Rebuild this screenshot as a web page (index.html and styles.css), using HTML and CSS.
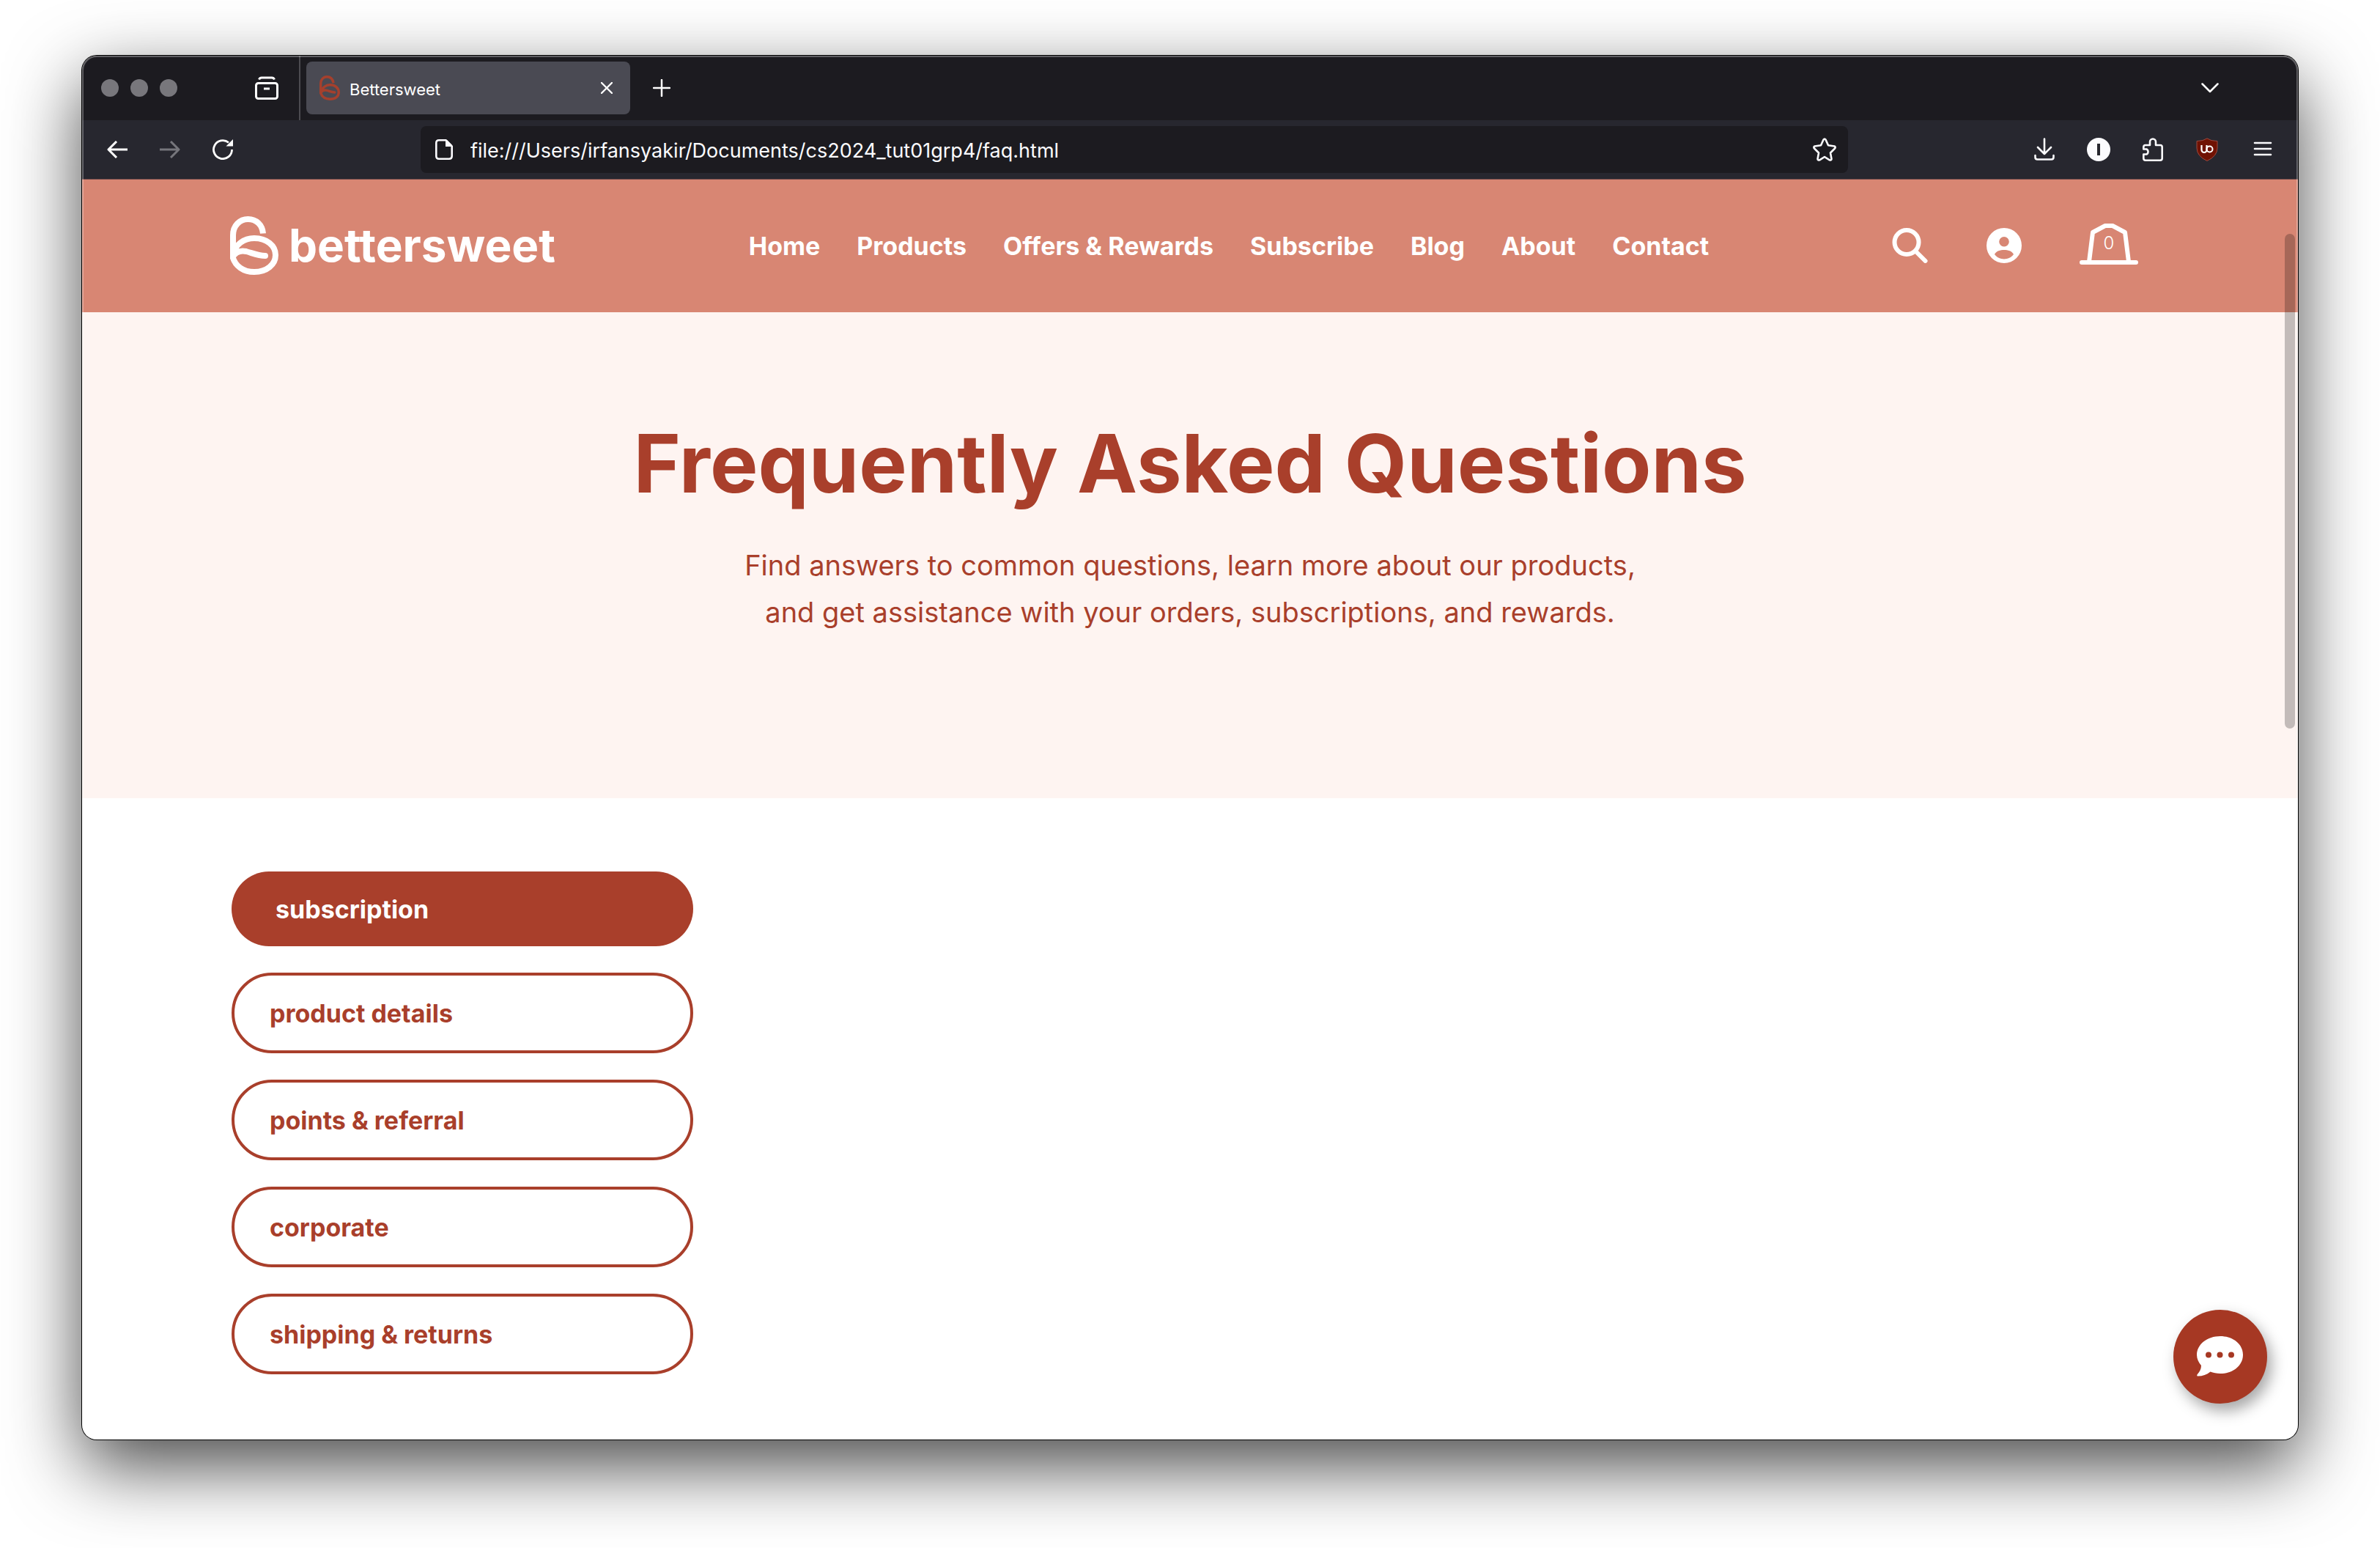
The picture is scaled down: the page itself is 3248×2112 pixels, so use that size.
FILE: index.html
```html
<!DOCTYPE html>
<html lang="en">
<head>
<meta charset="utf-8">
<title>Bettersweet</title>
<link rel="stylesheet" href="styles.css">
</head>
<body>
<div class="window">
  <div class="tabbar">
    <div class="lights"><span class="light"></span><span class="light"></span><span class="light"></span></div>
    <button class="icon-btn recent" aria-label="Recent browsing">
      <svg width="32" height="32" viewBox="0 0 32 32" fill="none" stroke="#fff" stroke-width="3"><rect x="1.500" y="9.500" width="29" height="21" rx="3"/><path d="M5.500 4.500Q6.500 2 9 2H23Q25.500 2 26.500 4.500"/><path d="M12 17H20"/></svg>
    </button>
    <div class="tab">
      <svg class="favicon" width="28" height="34" viewBox="0 0 66 80" fill="none" stroke="#a5402d" stroke-width="8"><path d="M4 52V26C4 14 12 4 24 4S43 13 45 24"/><path d="M3 54C10 38 20 30 34 30C50 30 62 40 62 54S50 76 34 76C20 76 9 70 4 57C8 48 16 46 24 48S38 54 49 54" stroke-linecap="round"/></svg>
      <span class="tab-title">Bettersweet</span>
      <button class="icon-btn" aria-label="Close tab"><svg width="16" height="16" viewBox="0 0 16 16" stroke="#fff" stroke-width="2.400" stroke-linecap="round"><path d="M1 1L15 15M15 1L1 15"/></svg></button>
    </div>
    <button class="icon-btn new-tab" aria-label="New tab"><svg width="24" height="24" viewBox="0 0 24 24" stroke="#fff" stroke-width="2.500" stroke-linecap="round"><path d="M12 1V23M1 12H23"/></svg></button>
    <button class="icon-btn all-tabs" aria-label="List all tabs"><svg width="24" height="14" viewBox="0 0 24 14" fill="none" stroke="#fff" stroke-width="2.500" stroke-linecap="round" stroke-linejoin="round"><path d="M1.500 1.500L12 12L22.500 1.500"/></svg></button>
  </div>
  <div class="toolbar">
    <div class="history">
      <button class="icon-btn" aria-label="Back"><svg width="28" height="24" viewBox="0 0 28 24" fill="none" stroke="#fff" stroke-width="3" stroke-linejoin="round"><path d="M28 12H2M13 1L2 12L13 23"/></svg></button>
      <button class="icon-btn" aria-label="Forward" disabled><svg width="28" height="24" viewBox="0 0 28 24" fill="none" stroke="#76767c" stroke-width="3" stroke-linejoin="round"><path d="M0 12H26M15 1L26 12L15 23"/></svg></button>
      <button class="icon-btn" aria-label="Reload"><svg width="28" height="28" viewBox="0 0 28 28"><path d="M26.500 14A12.500 12.500 0 1 1 22 4.500" fill="none" stroke="#fff" stroke-width="2.800"/><path d="M28 0V9.500H18.500Z" fill="#fff"/></svg></button>
    </div>
    <div class="urlbar">
      <svg width="24" height="28" viewBox="0 0 24 28"><path d="M5 1.300H14.500L22.700 9.500V23Q22.700 26.700 19 26.700H5Q1.300 26.700 1.300 23V5Q1.300 1.300 5 1.300Z" fill="none" stroke="#fbfbfe" stroke-width="2.600"/><path d="M14 1H16L23 8V10H14Z" fill="#fbfbfe"/></svg>
      <input class="url" type="text" aria-label="Address" value="file:///Users/irfansyakir/Documents/cs2024_tut01grp4/faq.html">
      <button class="icon-btn" aria-label="Bookmark this page"><svg width="32" height="32" viewBox="0 0 32 32" fill="none" stroke="#fbfbfe" stroke-width="2.600" stroke-linejoin="round"><path d="M14.500 2.500Q16 .5 17.500 2.500L21 10.300L29.500 11.500Q31.500 12.500 30 14.500L24 20.500L25.500 29Q25 31.200 22.800 30.300L16 26L9.200 30.300Q7 31.200 6.500 29L8 20.500L2 14.500Q.5 12.500 2.500 11.500L11 10.300Z"/></svg></button>
    </div>
    <div class="tools">
      <button class="icon-btn" aria-label="Downloads"><svg width="32" height="32" viewBox="0 0 32 32" fill="none" stroke="#fbfbfe" stroke-width="2.600" stroke-linecap="round" stroke-linejoin="round"><path d="M16 1.500V22M7 13L16 22L25 13M3.500 24V26.500Q3.500 29.500 6.500 29.500H25.500Q28.500 29.500 28.500 26.500V24"/></svg></button>
      <button class="icon-btn" aria-label="Account"><svg width="32" height="32" viewBox="0 0 32 32"><circle cx="16" cy="16" r="16" fill="#fbfbfe"/><rect x="14" y="8" width="4" height="16" fill="#27272f"/></svg></button>
      <button class="icon-btn" aria-label="Extensions"><svg width="32" height="32" viewBox="0 0 32 32" fill="none" stroke="#fbfbfe" stroke-width="2.600" stroke-linejoin="round"><path d="M12 10V5.500A4 4 0 0 1 20 5.500V10H26Q28.700 10 28.700 12.700V28Q28.700 30.700 26 30.700H6Q3.300 30.700 3.300 28V22.500H7.500A4 4 0 0 0 7.500 15.500H3.300V12.700Q3.300 10 6 10Z"/></svg></button>
      <button class="icon-btn" aria-label="uBlock Origin"><svg width="32" height="32" viewBox="0 0 32 32"><path d="M16 .8Q21 4.500 30 4.500V14Q30 25 16 31.500Q2 25 2 14V4.500Q11 4.500 16 .8Z" fill="#701203" stroke="#9c4a40" stroke-width="1"/><path d="M8.500 10V16.500A3.500 3.500 0 0 0 15.500 16.500V10" fill="none" stroke="#fff" stroke-width="2.200"/><circle cx="19.500" cy="15.500" r="4" fill="none" stroke="#fff" stroke-width="2"/></svg></button>
      <button class="icon-btn" aria-label="Menu"><svg width="32" height="32" viewBox="0 0 32 32" stroke="#fbfbfe" stroke-width="2.600" stroke-linecap="round"><path d="M7 7H29M7 15H29M7 23H29"/></svg></button>
    </div>
  </div>

  <div class="page">
    <header class="site-header">
      <a class="brand" href="#">
        <svg width="66" height="80" viewBox="0 0 66 80" fill="none" stroke="#fff" stroke-width="8"><path d="M4 48V26C4 13 13 4 24.500 4C36 4 44 12 45 23.500"/><path d="M3 52C8 39 18 30 33 30C50 30 62 40 62 53S50 76 33 76C18 76 7 68 3.500 55.500C8 48 15 46.500 22 48C31 50.500 38 54 48 54" stroke-linecap="round" stroke-linejoin="round"/><path d="M0 44H8V40L0 52Z" fill="#fff" stroke="none"/></svg>
        <span class="brand-name">bettersweet</span>
      </a>
      <nav class="nav">
        <a href="#">Home</a><a href="#">Products</a><a href="#">Offers &amp; Rewards</a><a href="#">Subscribe</a><a href="#">Blog</a><a href="#">About</a><a href="#">Contact</a>
      </nav>
      <div class="actions">
        <button class="icon-btn" aria-label="Search"><svg width="50" height="48" viewBox="0 0 50 48" fill="none" stroke="#fff" stroke-width="6"><circle cx="20" cy="19.500" r="16.500"/><path d="M32 31.500L45.500 45" stroke-linecap="round"/></svg></button>
        <button class="icon-btn" aria-label="Account"><svg width="48" height="48" viewBox="0 0 48 48"><path fill="#fff" fill-rule="evenodd" d="M24 0A24 24 0 1 1 24 48A24 24 0 1 1 24 0ZM24 12A6.800 6.800 0 1 0 24 25.600A6.800 6.800 0 1 0 24 12ZM11 36C17 44.500 31 44.500 37 36C35 31.500 29 30 24 30S13 31.500 11 36Z"/></svg></button>
        <button class="icon-btn cart" aria-label="Cart"><svg width="80" height="56" viewBox="0 0 80 56" fill="none" stroke="#fff" stroke-width="6" stroke-linejoin="round"><path d="M13 52L18 12L35 3H45L62 12L67 52"/><path d="M3 53H77" stroke-linecap="round"/></svg><span class="cart-count">0</span></button>
      </div>
    </header>
    <section class="hero">
      <h1>Frequently Asked Questions</h1>
      <p>Find answers to common questions, learn more about our products,<br>and get assistance with your orders, subscriptions, and rewards.</p>
    </section>
    <section class="faq">
      <div class="categories">
        <button class="category active">subscription</button>
        <button class="category">product details</button>
        <button class="category">points &amp; referral</button>
        <button class="category">corporate</button>
        <button class="category">shipping &amp; returns</button>
      </div>
    </section>
    <div class="scroll-thumb"></div>
    <button class="chat" aria-label="Open chat"><svg width="64" height="56" viewBox="0 0 64 56"><path fill="#fff" d="M32 0C49.500 0 63 11 63 25.500S49.500 51 32 51C27 51 22.500 50 18.500 48.500C13.500 52.500 8 54.500 1.500 54.500C0 54.500 0 53 .8 52C4 48.500 6 45 6 40C2.500 36 0 31 0 25.500C0 11 14.500 0 32 0Z"/><g fill="#a63823"><circle cx="16" cy="25.500" r="4"/><circle cx="31.500" cy="25.500" r="4"/><circle cx="47" cy="25.500" r="4"/></g></svg></button>
  </div>
</div>
</body>
</html>
```
FILE: styles.css
```css
* { box-sizing: border-box; }
body {
  display: flex;
  min-height: 100vh;
  margin: 0;
  padding: 76px 112px 148px;
  background: #fff;
  font-family: Inter, "Liberation Sans", sans-serif;
}
a { color: inherit; text-decoration: none; }
svg { display: block; flex: none; }
button { font: inherit; cursor: pointer; }
.icon-btn { flex: none; padding: 0; border: 0; background: none; color: #fff; }

.window {
  position: relative;
  flex: 1;
  display: flex;
  flex-direction: column;
  min-width: 0;
  border-radius: 20px;
  background: #fff;
  box-shadow: 0 0 0 1px #000, 0 36px 100px rgba(0, 0, 0, .72);
  overflow: hidden;
}
.window::after {
  content: "";
  position: absolute;
  inset: 0;
  border-radius: 20px;
  box-shadow: inset 0 0 0 2px rgba(255, 255, 255, .3);
  pointer-events: none;
}

.tabbar { display: flex; align-items: center; height: 88px; background: #1c1b20; padding: 0 108px 0 26px; }
.lights { display: flex; gap: 16px; }
.light { width: 24px; height: 24px; border-radius: 50%; background: #78777c; }
.recent { margin-left: 106px; margin-right: 28px; }
.tab {
  position: relative;
  display: flex;
  align-items: center;
  width: 442px;
  height: 72px;
  margin-left: 10px;
  padding: 0 24px 0 18px;
  border-radius: 8px;
  background: #4a4a53;
  color: #fff;
  font-size: 22px;
}
.tab::before { content: ""; position: absolute; left: -10px; top: -8px; width: 2px; height: 88px; background: #4c4b50; }
.tab-title { flex: 1; margin-left: 13px; padding-top: 4px; line-height: 28px; }
.new-tab { margin-left: 31px; }
.all-tabs { margin-left: auto; }

.toolbar { display: flex; align-items: center; padding: 8px 34px; background: #27272f; border-bottom: 1px solid #6d4a4a; }
.history { display: flex; align-items: center; gap: 44px; }
.urlbar {
  flex: 1;
  display: flex;
  align-items: center;
  height: 64px;
  margin: 0 252px 0 256px;
  padding: 0 16px 0 20px;
  border-radius: 8px;
  background: #1c1b20;
}
.url { flex: 1; min-width: 0; margin: 0 0 0 24px; padding: 2px 0 0; border: 0; outline: 0; background: none; color: #fbfbfe; font: inherit; font-size: 27px; }
.tools { display: flex; align-items: center; gap: 42px; }

.page { position: relative; flex: 1; }
.site-header { display: flex; align-items: center; justify-content: space-between; height: 181px; padding: 0 218px 2px 202px; background: #d88673; color: #fff; }
.brand { display: flex; align-items: center; gap: 14px; }
.brand-name { font-size: 62px; font-weight: 700; line-height: 72px; }
.nav { display: flex; gap: 50px; margin-left: 14px; padding-top: 2px; font-size: 34px; font-weight: 700; line-height: 44px; }
.actions { display: flex; align-items: center; gap: 79px; }
.cart { position: relative; margin-bottom: 4px; }
.cart-count { position: absolute; inset: 0; font-size: 24px; font-weight: 300; line-height: 54px; text-align: center; }

.hero { padding: 141px 48px 222px; background: #fef4f1; color: #a93f2b; text-align: center; }
.hero h1 { margin: 0 0 42px; font-size: 110px; font-weight: 700; line-height: 130px; }
.hero p { margin: 0; font-size: 38px; line-height: 64px; }

.faq { padding: 100px 204px 80px; }
.categories { display: flex; flex-direction: column; gap: 36px; width: 630px; }
.category {
  height: 110px;
  padding: 0 48px;
  border: 4px solid #a93f2b;
  border-radius: 56px;
  background: #fff;
  color: #a93f2b;
  font-size: 34px;
  font-weight: 700;
  text-align: left;
}
.category.active { height: 102px; padding: 0 60px; border: 0; background: #a93f2b; color: #fff; }

.scroll-thumb { position: absolute; top: 74px; right: 4px; width: 14px; height: 675px; border-radius: 7px; background: rgba(0, 0, 0, .23); }
.chat {
  position: absolute;
  right: 42px;
  bottom: 49px;
  display: flex;
  align-items: center;
  justify-content: center;
  width: 128px;
  height: 128px;
  padding: 0;
  border: 0;
  border-radius: 50%;
  background: #a63823;
  box-shadow: 6px 10px 20px rgba(0, 0, 0, .35);
}
```
